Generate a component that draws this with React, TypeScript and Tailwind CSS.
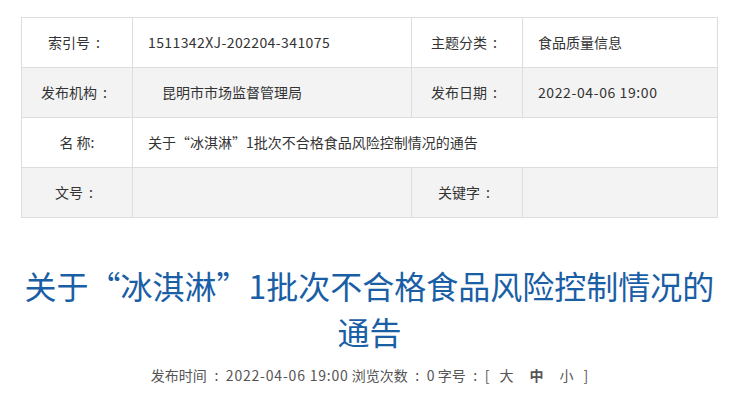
function Colon({ w = "w-[19px]" }: { w?: string }) {
  return <span className={`inline-block text-center ${w}`}>:</span>
}

function Label({ text }: { text: string }) {
  return (
    <td className="border border-[#dddddd] text-center">
      {text}
      <span className="inline-block w-[16px] text-center">:</span>
    </td>
  )
}

export default function App() {
  const font = { fontFamily: '"Noto Sans CJK SC", "Noto Sans", sans-serif' }

  return (
    <div className="bg-white w-[739px] h-[398px] overflow-hidden" style={font}>
      <div className="px-[21px] pt-[17px]">
        <table className="w-full border-collapse text-[14px] text-[#333] table-fixed">
          <colgroup>
            <col className="w-[111px]" />
            <col className="w-[279px]" />
            <col className="w-[111px]" />
            <col />
          </colgroup>
          <tbody>
            <tr className="h-[50px] bg-white">
              <Label text="索引号" />
              <td className="border border-[#dddddd] pl-[15px] tracking-[0.4px]">1511342XJ-202204-341075</td>
              <Label text="主题分类" />
              <td className="border border-[#dddddd] pl-[15px]">食品质量信息</td>
            </tr>
            <tr className="h-[50px] bg-[#f3f3f3]">
              <Label text="发布机构" />
              <td className="border border-[#dddddd] pl-[29px]">昆明市市场监督管理局</td>
              <Label text="发布日期" />
              <td className="border border-[#dddddd] pl-[15px] tracking-[0.6px]">2022-04-06 19:00</td>
            </tr>
            <tr className="h-[50px] bg-white">
              <td className="border border-[#dddddd] text-center">名 称:</td>
              <td colSpan={3} className="border border-[#dddddd] pl-[15px]">
                关于“冰淇淋”1批次不合格食品风险控制情况的通告
              </td>
            </tr>
            <tr className="h-[50px] bg-[#f3f3f3]">
              <Label text="文号" />
              <td className="border border-[#dddddd]"></td>
              <Label text="关键字" />
              <td className="border border-[#dddddd]"></td>
            </tr>
          </tbody>
        </table>

        <h1 className="mt-[44px] text-center text-[32px] leading-[46px] text-[#1a5ea6] font-normal">
          关于“冰淇淋”1批次不合格食品风险控制情况的通告
        </h1>

        <div className="mt-[11px] text-center text-[14px] leading-[20px] text-[#555]">
          发布时间<Colon />
          <span className="tracking-[0.8px]">2022-04-06 19:00</span> 浏览次数<Colon />0 字号<Colon />[
          <span className="mx-[10px]">大</span>
          <span className="mx-[6px] font-bold">中</span>
          <span className="mx-[10px]">小</span>]
        </div>
      </div>
    </div>
  )
}
